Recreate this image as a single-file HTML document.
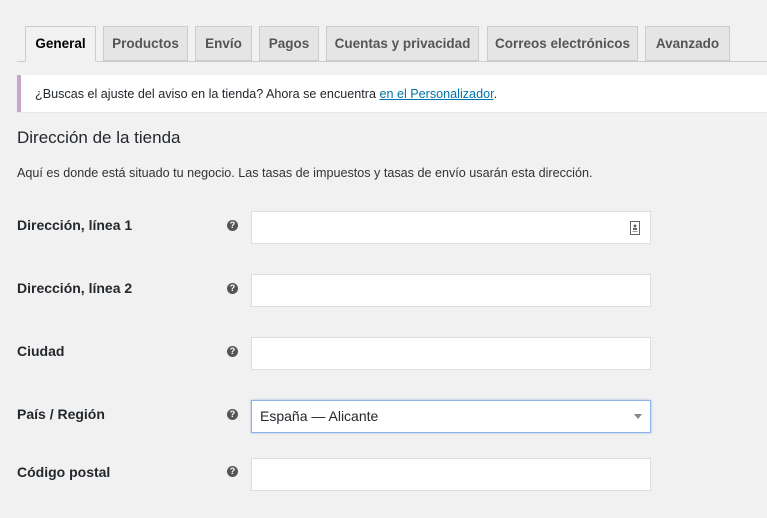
<!DOCTYPE html>
<html><head><meta charset="utf-8"><style>
body{margin:0;width:767px;height:518px;background:#f1f1f1;font-family:"Liberation Sans",sans-serif;color:#23282d;overflow:hidden;position:relative}
.tab{position:absolute;top:26px;height:35px;box-sizing:border-box;border:1px solid #ccc;background:#e5e5e5;color:#555;font-size:13.5px;font-weight:bold;line-height:34px;text-align:center;white-space:nowrap}
.tab.a{background:#f1f1f1;color:#000;border-bottom-color:#f1f1f1;height:36px}
.line{position:absolute;left:17px;right:0;top:61px;border-top:1px solid #ccc}
.notice{position:absolute;left:17px;top:75px;width:750px;height:37px;background:#fff;border-left:4px solid #c9a5c8;box-sizing:border-box;font-size:12.6px;line-height:38px;padding-left:14px;box-shadow:0 1px 1px rgba(0,0,0,.05)}
.notice a{color:#0073aa;text-decoration:underline}
h2{position:absolute;left:17px;top:128px;margin:0;font-size:17px;font-weight:normal;color:#23282d}
.desc{position:absolute;left:17px;top:166px;font-size:12.6px;color:#333}
.lab{position:absolute;left:17px;font-size:14px;font-weight:bold;color:#23282d}
.q{position:absolute;left:227px;width:11px;height:11px;border-radius:50%;background:#555;color:#fff;font-size:9px;font-weight:bold;text-align:center;line-height:11px}
.in{position:absolute;left:251px;width:400px;height:33px;box-sizing:border-box;background:#fff;border:1px solid #ddd;font-size:14px;line-height:31px;padding-left:8px}
.sel{border:1px solid #8fb0e8;box-shadow:0 0 2px rgba(80,130,220,.5)}
</style></head><body>
<div class="tab" style="left:103px;width:85px">Productos</div>
<div class="tab" style="left:195px;width:57px">Envío</div>
<div class="tab" style="left:259px;width:60px">Pagos</div>
<div class="tab" style="left:326px;width:153px">Cuentas y privacidad</div>
<div class="tab" style="left:487px;width:151px">Correos electrónicos</div>
<div class="tab" style="left:645px;width:85px">Avanzado</div>
<div class="line"></div>
<div class="tab a" style="left:25px;width:71px;background:#f1f1f1">General</div>
<div class="notice">¿Buscas el ajuste del aviso en la tienda? Ahora se encuentra <a>en el Personalizador</a>.</div>
<h2>Dirección de la tienda</h2>
<div class="desc">Aquí es donde está situado tu negocio. Las tasas de impuestos y tasas de envío usarán esta dirección.</div>

<div class="lab" style="top:217px">Dirección, línea 1</div>
<div class="q" style="top:220px">?</div>
<div class="in" style="top:211px"><svg style="position:absolute;right:10px;top:9px" width="10" height="14" viewBox="0 0 10 14"><rect x="0.5" y="0.5" width="9" height="13" fill="none" stroke="#666"/><circle cx="5" cy="5" r="1.5" fill="#666"/><rect x="3" y="7" width="4" height="2" fill="#666"/><rect x="2.5" y="10" width="5" height="1" fill="#999"/></svg></div>

<div class="lab" style="top:280px">Dirección, línea 2</div>
<div class="q" style="top:283px">?</div>
<div class="in" style="top:274px"></div>

<div class="lab" style="top:343px">Ciudad</div>
<div class="q" style="top:346px">?</div>
<div class="in" style="top:337px"></div>

<div class="lab" style="top:406px">País / Región</div>
<div class="q" style="top:409px">?</div>
<div class="in sel" style="top:400px">España — Alicante<span style="position:absolute;right:8px;top:13px;width:0;height:0;border-left:4px solid transparent;border-right:4px solid transparent;border-top:5px solid #888"></span></div>

<div class="lab" style="top:464px">Código postal</div>
<div class="q" style="top:466px">?</div>
<div class="in" style="top:458px"></div>
</body></html>
